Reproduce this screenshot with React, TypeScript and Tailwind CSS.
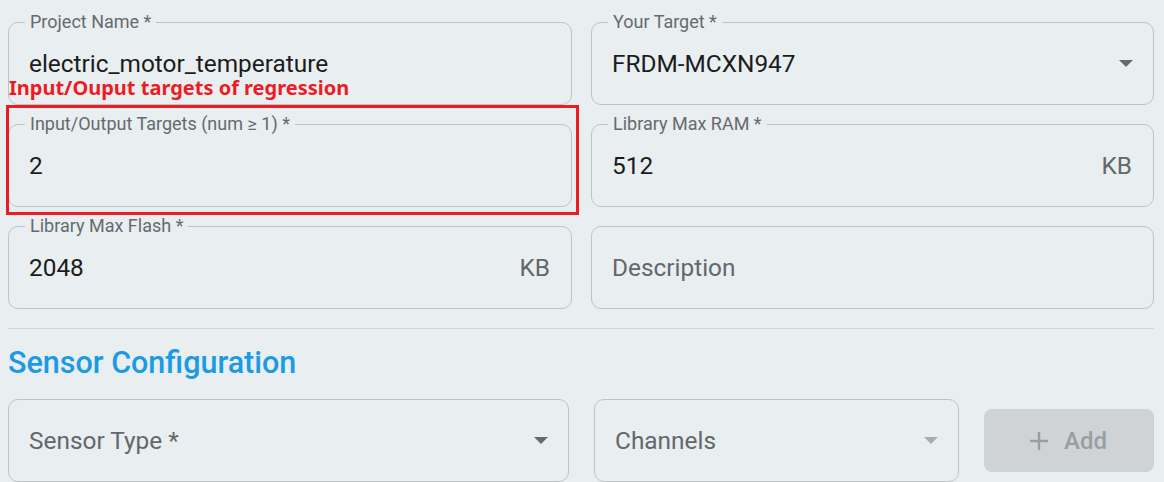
import React from "react";

const Field = ({
  label,
  value,
  placeholder,
  suffix,
  arrow,
  arrowLight,
}: {
  label?: string;
  value?: string;
  placeholder?: string;
  suffix?: string;
  arrow?: boolean;
  arrowLight?: boolean;
}) => (
  <div className="relative h-[83px] rounded-[10px] border border-[#bfc3c6] flex items-center pl-[20px] pr-[21px]">
    {label && (
      <span className="absolute left-[16px] top-[-13px] bg-[#e9eef1] px-[5px] text-[18px] leading-[24px] text-[#666a6d]">
        {label}
      </span>
    )}
    {value && <span className="flex-1 text-[24.4px] leading-[24px] text-[#1c1c1c]">{value}</span>}
    {placeholder && (
      <span className="flex-1 text-[24.4px] leading-[24px] text-[#63676a]">{placeholder}</span>
    )}
    {suffix && <span className="text-[24.4px] leading-[24px] text-[#63676a]">{suffix}</span>}
    {arrow && (
      <svg width="14" height="7" viewBox="0 0 14 7" className="mr-[-1px]">
        <path d="M0 0 L14 0 L7 7 Z" fill={arrowLight ? "#a9adb0" : "#666a6d"} />
      </svg>
    )}
  </div>
);

export default function App() {
  return (
    <div
      className="relative w-[1164px] h-[482px] overflow-hidden bg-[#e9eef1]"
      style={{ fontFamily: "Roboto, 'Liberation Sans', sans-serif" }}
    >
      <div className="pl-[8px] pr-[10px] pt-[22px]">
        <div className="grid grid-cols-[564px_563px] gap-x-[19px] gap-y-[19px]">
          <Field label="Project Name *" value="electric_motor_temperature" />
          <Field label="Your Target *" value="FRDM-MCXN947" arrow />
          <Field label="Input/Output Targets (num ≥ 1) *" value="2" />
          <Field label="Library Max RAM *" value="512" suffix="KB" />
          <Field label="Library Max Flash *" value="2048" suffix="KB" />
          <Field placeholder="Description" />
        </div>
        <div className="mt-[19px] h-px bg-[#d3d7da]" />
        <div className="mt-[16px] text-[30.5px] leading-[36px] font-medium text-[#1a9be3]">
          Sensor Configuration
        </div>
        <div className="mt-[18px] flex items-start">
          <div className="w-[561px]">
            <Field placeholder="Sensor Type *" arrow />
          </div>
          <div className="ml-[25px] w-[365px]">
            <Field placeholder="Channels" arrow arrowLight />
          </div>
          <div className="ml-[25px] mt-[10px] w-[170px] h-[63px] rounded-[8px] bg-[#cfd3d6] flex items-center justify-center gap-[15px] pr-[2px] text-[#9a9ea1]">
            <svg width="20" height="20" viewBox="0 0 20 20">
              <path d="M10 1 V19 M1 10 H19" stroke="#9a9ea1" strokeWidth="2.4" />
            </svg>
            <span className="text-[24px] font-medium">Add</span>
          </div>
        </div>
      </div>

      <div
        className="absolute left-[9px] top-[78px] text-[20px] leading-[20px] font-bold text-[#ec1c24]"
        style={{ fontFamily: "'Noto Sans', 'Open Sans', sans-serif" }}
      >
        Input/Ouput targets of regression
      </div>
      <div className="absolute left-[6px] top-[105px] w-[573px] h-[110px] border-[3px] border-[#ec1c24]" />
    </div>
  );
}
